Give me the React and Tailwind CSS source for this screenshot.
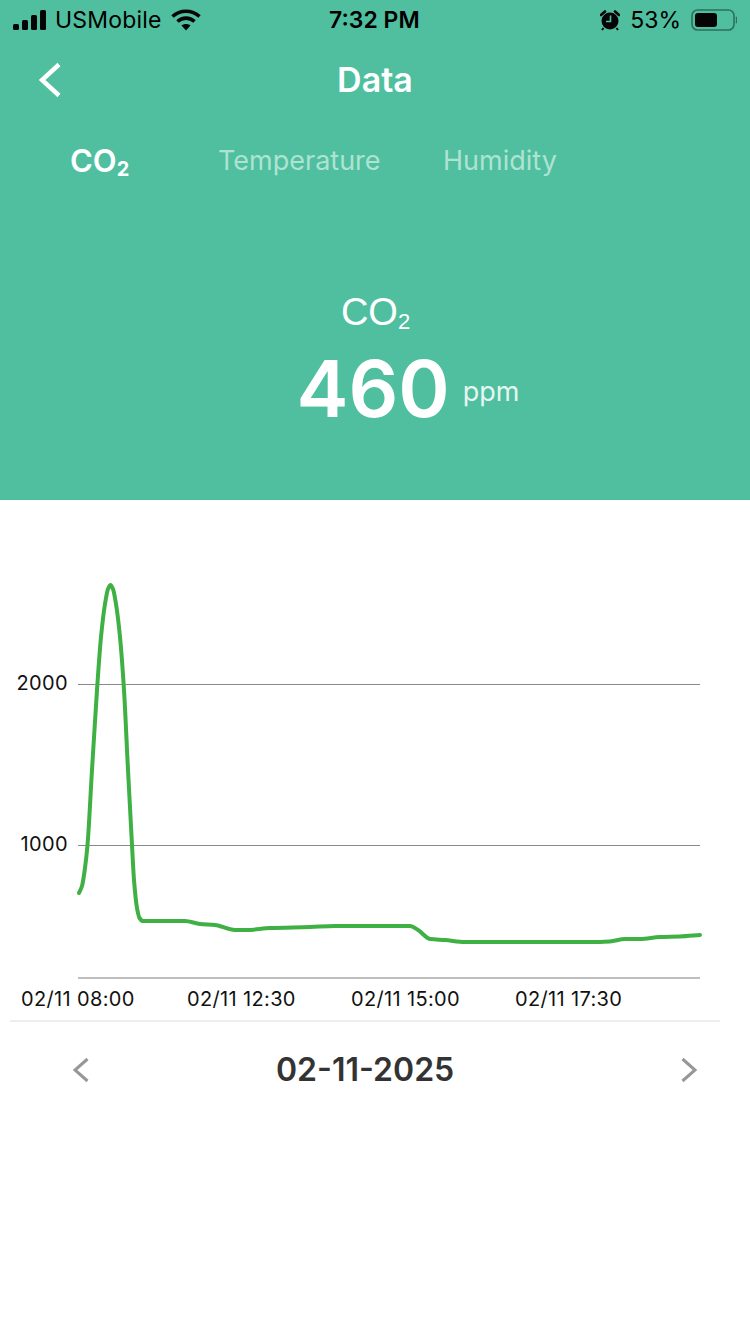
import React from "react";

const curvePoints = [
  [79, 893], [82, 886], [85, 868], [87.5, 845], [92, 770], [97, 690], [101, 637], [105, 604], [108, 589],
  [110.5, 585], [113, 589], [116, 604], [120, 637], [124, 690], [128, 770], [132, 845], [134, 880],
  [137, 908], [139.5, 918], [143, 921],
  [185, 921], [200, 924], [215, 925], [235, 930], [247, 930], [270, 928], [310, 927],
  [335, 926], [410, 926], [418, 930], [430, 939], [445, 940], [465, 942], [600, 942],
  [610, 941.5], [625, 939], [640, 939], [660, 937], [680, 936.5], [700, 935],
];

// monotone cubic, same idea as the chart lib's monotoneX line
const buildPath = (pts) => {
  const n = pts.length;
  const slopes = [];
  for (let i = 0; i < n - 1; i++) {
    slopes.push((pts[i + 1][1] - pts[i][1]) / (pts[i + 1][0] - pts[i][0]));
  }
  const t = [slopes[0]];
  for (let i = 1; i < n - 1; i++) {
    if (slopes[i - 1] * slopes[i] <= 0) {
      t.push(0);
    } else {
      const h0 = pts[i][0] - pts[i - 1][0];
      const h1 = pts[i + 1][0] - pts[i][0];
      t.push((3 * (h0 + h1)) / ((2 * h1 + h0) / slopes[i - 1] + (h1 + 2 * h0) / slopes[i]));
    }
  }
  t.push(slopes[n - 2]);
  let d = `M${pts[0][0]} ${pts[0][1]}`;
  for (let i = 0; i < n - 1; i++) {
    const h = (pts[i + 1][0] - pts[i][0]) / 3;
    d += ` C${pts[i][0] + h} ${pts[i][1] + t[i] * h} ${pts[i + 1][0] - h} ${pts[i + 1][1] - t[i + 1] * h} ${pts[i + 1][0]} ${pts[i + 1][1]}`;
  }
  return d;
};

const StatusBar = () => (
  <div className="flex items-center justify-between h-10 pl-[13px] pr-[13px] text-[23px] text-black">
    <div className="flex items-center w-[260px]">
      <svg width="34" height="21" viewBox="0 0 34 21" fill="#050505">
        <rect x="0" y="14" width="6" height="6" rx="1.5" />
        <rect x="9" y="10" width="6" height="10" rx="1.5" />
        <rect x="18" y="5" width="6" height="15" rx="1.5" />
        <rect x="27" y="0" width="6" height="20" rx="1.5" />
      </svg>
      <span className="ml-[8px] font-normal leading-none tracking-[0.2px]">USMobile</span>
      <svg className="ml-[9px]" width="30" height="22" viewBox="0 0 30 22" fill="none" stroke="#050505" strokeWidth="3.6">
        <path d="M1.5 7.5C9 .5 21 .5 28.5 7.5" />
        <path d="M6.5 12.5C11.5 8 18.5 8 23.5 12.5" />
        <path d="M15 21.5L10.5 16.5C13 14.5 17 14.5 19.5 16.5Z" fill="#050505" stroke="none" />
      </svg>
    </div>
    <span className="font-semibold text-[23px] leading-none absolute left-[329px]">7:32 PM</span>
    <div className="flex items-center">
      <svg width="20" height="21" viewBox="0 0 20 21">
        <circle cx="10" cy="11" r="8.5" fill="#050505" />
        <path d="M1 5L5 1.5M19 5L15 1.5" stroke="#050505" strokeWidth="2.6" strokeLinecap="round" />
        <path d="M3.5 18L2 20M16.5 18L18 20" stroke="#050505" strokeWidth="2" />
        <path d="M10.5 5.5V11.5H6" stroke="#4fbf9f" strokeWidth="1.6" fill="none" />
      </svg>
      <span className="ml-[10px] leading-none">53%</span>
      <svg className="ml-[10px]" width="46" height="24" viewBox="0 0 46 24">
        <rect x="1" y="2" width="42" height="20" rx="5.5" fill="none" stroke="#2f6f5e" strokeWidth="1.6" />
        <rect x="4" y="5" width="22" height="14" rx="3" fill="#050505" />
        <path d="M45 9C46 10 46 14 45 15" stroke="#2f6f5e" strokeWidth="1.6" fill="none" />
      </svg>
    </div>
  </div>
);

const Tab = ({ active, children, className }) => (
  <span className={`leading-none ${active ? "text-[31px] font-semibold text-white" : "text-[27px] text-[#aee3d2]"} ${className}`}>
    {children}
  </span>
);

const Chart = () => (
  <svg width="750" height="521" viewBox="0 500 750 521" className="block">
    <line x1="78" y1="684.5" x2="700" y2="684.5" stroke="#8a8a8a" />
    <line x1="78" y1="845.5" x2="700" y2="845.5" stroke="#8a8a8a" />
    <line x1="78" y1="978" x2="700" y2="978" stroke="#a8a8a8" strokeWidth="1.4" />
    <path d={buildPath(curvePoints)} fill="none" stroke="#3fb044" strokeWidth="4" strokeLinecap="round" strokeLinejoin="round" />
    <g fontFamily="Inter, sans-serif" fontSize="20" letterSpacing="0.35" fill="#111111">
      <text x="68" y="690" textAnchor="end">2000</text>
      <text x="68" y="851" textAnchor="end">1000</text>
      <text x="21" y="1006">02/11 08:00</text>
      <text x="187" y="1006">02/11 12:30</text>
      <text x="351" y="1006">02/11 15:00</text>
      <text x="515" y="1006">02/11 17:30</text>
    </g>
  </svg>
);

export default function App() {
  return (
    <div className="relative w-[750px] h-[1334px] bg-white overflow-hidden font-['Inter',sans-serif]">
      <div className="h-[500px] bg-[#4fbf9f] flex flex-col">
        <StatusBar />

        <div className="relative flex items-center justify-center h-[80px]">
          <svg className="absolute left-[38px] top-[22px]" width="24" height="36" viewBox="0 0 24 36" fill="none" stroke="#ffffff" strokeWidth="4.4">
            <path d="M21 2.5L4 18L21 33.5" />
          </svg>
          <h1 className="text-[34px] font-semibold text-white leading-none">Data</h1>
        </div>

        <div className="flex items-center h-[40px] mt-[20px] pl-[70px]">
          <Tab active className="w-[148px]">
            CO<sub className="text-[20px] align-baseline relative top-[4px] font-bold">2</sub>
          </Tab>
          <Tab className="w-[225px]">Temperature</Tab>
          <Tab>Humidity</Tab>
        </div>

        <div className="flex flex-col items-center mt-[113px] text-white">
          <div className="text-[38px] leading-none ml-[1px] font-['Liberation_Sans',sans-serif]">
            CO<sub className="text-[22px] align-baseline relative top-[4px]">2</sub>
          </div>
          <div className="flex items-start mt-[16px] ml-[66px]">
            <span className="text-[78px] font-semibold leading-[84px]">460</span>
            <span className="text-[27px] leading-none ml-[13px] mt-[31px] text-[#e6f6f1]">ppm</span>
          </div>
        </div>
      </div>

      <Chart />

      <div className="mx-[10px] w-[710px] border-t-2 border-[#eeeeee] -mt-[1px]" />

      <div className="flex items-center w-[730px] h-[96px] pl-[72px] pr-[32px]">
        <svg width="18" height="26" viewBox="0 0 18 26" fill="none" stroke="#979797" strokeWidth="3">
          <path d="M15.5 2L3 13L15.5 24" />
        </svg>
        <span className="text-[32px] font-semibold text-[#333333] leading-none ml-[186px] mr-auto">02-11-2025</span>
        <svg width="18" height="26" viewBox="0 0 18 26" fill="none" stroke="#979797" strokeWidth="3">
          <path d="M2.5 2L15 13L2.5 24" />
        </svg>
      </div>
    </div>
  );
}
